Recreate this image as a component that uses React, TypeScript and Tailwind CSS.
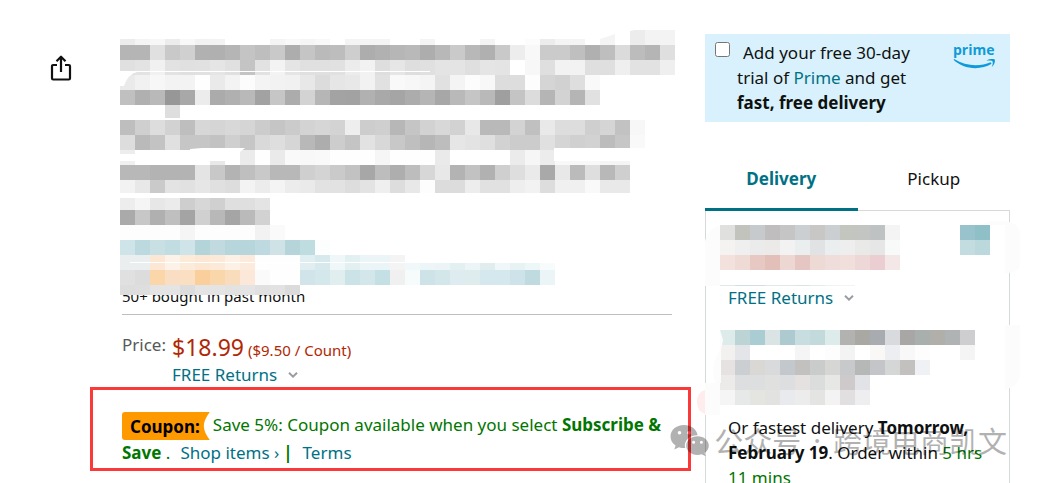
import React from "react";

type Band = { x?: number; y: number; h?: number; tiles: string };

const TILE = 15;

const titleBands: Band[] = [
  { y: 9, h: 6, tiles: "ec f4 f7 ec f8 f2 f3 -- -- -- f4 f8 f5 f8 -- f4 f4 f4 -- -- f4 -- -- -- f4 -- -- fc ec f4 f4" },
  { y: 15, tiles: "b5 b5 e0 c9 d0 b1 b0 b5 c4 be c9 ad c5 ba bd ce ad b1 b6 b9 ad b8 ca b8 b0 c9 ed f8 cb cb bf b0 be db bc b5 df" },
  { y: 30, tiles: "e0 e3 f1 e2 e0 e1 e5 e0 c4 e2 f3 e5 e0 e0 e1 ec f2 de e6 de e0 e4 e4 df e5 e4 -- f7 df f2 f2 df df ef e2 e2 ef" },
  { y: 45, tiles: "ea f1 f7 f3 f3 fe ea f3 fc f4 f2 f1 e8 dc e6 e8 f2 e1 f9 f7 f4 e1 f4 fc f8 dd dd fd d5 d1 de f9" },
  { y: 60, tiles: "c0 b0 b9 97 a8 ec ab b0 b9 a2 c6 ac d3 b6 a3 a2 b1 a9 a5 ac b5 a7 b9 c5 b9 9f c4 dc b5 d3 b5 e1" },
  { y: 75, h: 13, tiles: "-- -- -- de" },
  { y: 90, tiles: "be cf dd d2 be d7 d5 d8 d5 cc c5 cb d3 d6 d3 ee cd cf b7 c5 d2 d8 d2 e8 b9 b9 d3 c0 e9 dd dd cf d5 c2 f7" },
  { y: 105, tiles: "dd ba c3 e0 c6 c6 c2 cf c6 d9 de d6 b8 ad cd c4 e2 d8 c8 bf b6 bd e6 e3 df d2 cc cc e0 d5 d0 d2 bc c6 f9" },
  { y: 120, h: 4, tiles: "ed" },
  { y: 131, h: 4, tiles: "f0 -- -- -- -- -- e8" },
  { y: 120, tiles: "-- -- -- -- -- -- -- -- eb fe ea f9 f8 f9 fe fe fe f6 fe fe fe ea -- -- -- -- eb f6 ec" },
  { x: 435, y: 131, h: 4, tiles: "f8 f8 f8 f5 f5" },
  { y: 135, tiles: "b8 b8 b3 b3 b3 e4 c8 b3 bf c9 b8 b8 cf d4 ca c2 a7 bd ae bd d7 e8 b3 c2 b1 cf de ea a9 e8 bb de b8 cf" },
  { y: 150, h: 13, tiles: "f2 e8 ca e3 e1 e6 e0 dd f3 ec f4 ec ea e2 e2 dd e3 ef dd e8 fd dc dc ed e1 e1 ee f2 dd f0 f0 f9 e9 e9" },
  { y: 168, h: 12, tiles: "ed f5 e7 eb ce d7 d0 df df e4" },
  { y: 180, tiles: "aa c7 b0 bf a4 d0 b8 a5 ba d2" },
  { y: 195, tiles: "fd fd fd fd f5 fd fd fd fd f2 fa" },
  { y: 210, tiles: "cfe4e8 bbd9df c8e0e4 c2dde2 cfe4e9 b3d5da c0dae0 b7d6db b7d6db bfd9e0 cfe3e7 b5d5da bfdce1 fcfefe" },
  { y: 225, tiles: "ebeeee ebeeee fce7d4 fdf2e8 fdebd9 fce7d4 fce9d8 fdf1e6 fceadd fe fe fe e0edf1 d8e9ed f0f7f8 e3f0f2 ebf4f6 ebf4f6 f4" },
  { x: 285, y: 233, h: 7, tiles: "f1f8f9 ecf5f7 ecf4f6 e2f0f2 ebf4f6 dfedef eff7f9 e7f2f3 eef7f8 f7fbfc" },
  { y: 240, tiles: "e0 dc fad6a8 fadec3 fadfc2 facf9c fad6ab f8dcbc fce8d9 fa fe fe d0e4ea d4e8ec e1eef0 cbe2e7 d3e6ea c5e0e4 f0 f6fbfc cee3e8 d3e7eb deebf0 dfeced d4e8ed d5e8ed cde3e9 c0dbe0 ebf4f6" },
  { y: 255, h: 10, tiles: "dd de e4 e4 dc e4 e4 e2 e4 e0 e2 db" },
];

const priceBands: Band[] = [
  { y: 0, tiles: "e0e0df c3c3be c6cacd c0bdbe c6c5c6 cbcfd2 c8c7c5 cbcfd2 c3c5bf c2c5c2 bfc2c3 f4 -- -- -- -- 98c3cc 8fc0c7" },
  { y: 15, tiles: "f4f3f1 efeff0 eb ebeae8 f2 ebeeee e1e2e3 ebeeee ee e9e9e8 e6 f8faf9 -- -- -- -- c3dce0 bbd8dd" },
  { y: 30, tiles: "f2e1dc eedbd5 e8c8c2 e2c0b9 edd7d2 e5c6c3 eedad5 eedddb f0dfdb edd7d7 ebced2 f3e8e7" },
  { y: 60, h: 1, tiles: "dfe9e8 cfdfe4 cfdfe4 dfe9e8 dfe9e8 d8e5e5 e4eceb eef3f3 f4" },
];

const addressBands: Band[] = [
  { y: 0, tiles: "deebeb bdd4d6 a9cdd3 dae4e4 adcad0 c8dde0 c3dadc deebeb b2b2b0 a9a8a3 a8acb0 d8dade a8a7a5 a8afac b0afa9 afb3b4 ceced0" },
  { y: 15, tiles: "f3f1f0 e4e5e8 -- -- -- f5 -- fd f3 -- f9f8f6 eceef1 f8 fd -- -- f4" },
  { y: 30, tiles: "e6e2e1 cbcfd1 d9d8d4 d9dadc c3c8cc c2c1bf cacccb d6d7d5 c7c9ca b5b8b6 c4c5c8 d5d7d6 c2c1bf f0f1f4" },
  { y: 45, tiles: "ecebe9 dddee0 dddee0 e0e0df dddee0 e4e1e0 dbdddc e7e7e5 cecacb e1e3e6" },
  { y: 60, tiles: "f5f5f5 e7e9e8 e4e4e1 e2e2e0 e9eaed ececec e4e4e3 f3 e2dfe1 eeeef0" },
];

function Tiles({ bands }: { bands: Band[] }) {
  return (
    <g shapeRendering="crispEdges">
      {bands.map((band, b) =>
        band.tiles.split(" ").map((tone, i) =>
          tone === "--" ? null : (
            <rect
              key={`${b}-${i}`}
              x={(band.x ?? 0) + i * TILE}
              y={band.y}
              width={TILE}
              height={band.h ?? TILE}
              fill={tone.length === 2 ? `#${tone}${tone}${tone}` : `#${tone}`}
            />
          ),
        ),
      )}
    </g>
  );
}

function Chevron() {
  return (
    <svg viewBox="0 0 10 6" className="h-[6px] w-[10px]" fill="none" stroke="#999ca1" strokeWidth="2" aria-hidden="true">
      <path d="M1 .8 5 4.6 9 .8" />
    </svg>
  );
}

function ReturnsLink() {
  return (
    <a href="#returns" className="flex items-center gap-[11px] leading-6 text-[#007185]">
      FREE Returns
      <Chevron />
    </a>
  );
}

function PrimeLogo() {
  return (
    <div className="flex w-[43px] flex-col text-[#0f9ad8]">
      <span className="font-['Open_Sans',sans-serif] text-[14px] leading-[18px] font-bold">prime</span>
      <svg viewBox="0 0 43 10" className="h-[10px] w-[43px]" aria-hidden="true">
        <path d="M.5 .8C10 10.200 27 11.800 38.600 4.800L37.600 3.200C27 7.800 12.500 7.200 1.200 0Z" fill="currentColor" />
        <path d="M33.500 1.600C36.500 0 39.600-.2 41.800.5C42.300 3 41.400 5.600 38.800 8C39.600 5.400 40.200 3.600 39.400 2.300C38.200 1.500 36.200 1.600 33.500 1.600Z" fill="currentColor" />
      </svg>
    </div>
  );
}

function Smudges() {
  return (
    <svg viewBox="0 0 325 205" className="pointer-events-none absolute top-[215px] -left-2 h-[205px] w-[325px]" aria-hidden="true">
      <path d="M8 26Q12 12 23 11V71H8Z" fill="#fcfcfc" />
      <path d="M285 9Q295 5 308 6Q323 8 323 20V50Q322 58 308 58V10H285Z" fill="#fcfcfc" />
      <path d="M308 110H323V160Q321 173 308 174Z" fill="#fcfcfc" />
      <path d="M23 115 26 125 24 135V168H18Q13 150 23 135Z" fill="#fcfcfc" />
      <path d="M8 168H23V200H8Z" fill="#fcfcfc" />
      <path d="M8 175Q0 177 0 187Q0 196 8 199Z" fill="#ffecec" />
    </svg>
  );
}

function Watermark() {
  return (
    <div className="pointer-events-none absolute top-[422px] right-[33px] z-20 flex items-center gap-1 text-black opacity-30" aria-hidden="true">
      <svg viewBox="0 0 40 33" className="h-[33px] w-[40px]">
        <path
          fill="currentColor"
          fillRule="evenodd"
          d="M14 1C6.200 1 .5 6 .5 12.500C.5 16.300 2.500 19.500 5.600 21.600L4.300 25.600L9 23.300C10.900 24 13 24.200 15.200 24.100C13.300 17 19.600 11 27.600 11.300C26.600 5.200 21 1 14 1ZM9.500 7A1.800 1.800 0 1 0 9.500 10.600A1.800 1.800 0 1 0 9.500 7ZM19 7A1.800 1.800 0 1 0 19 10.600A1.800 1.800 0 1 0 19 7Z"
        />
        <path
          fill="currentColor"
          fillRule="evenodd"
          d="M27.500 12.200C21 12.200 16.200 16.400 16.200 21.600C16.200 27 21 31 27.500 31C29 31 30.400 30.800 31.700 30.300L35.600 32.300L34.600 29C37.200 27.200 38.800 24.600 38.800 21.600C38.800 16.400 34 12.200 27.500 12.200ZM23.600 16.800A1.500 1.500 0 1 0 23.600 19.800A1.500 1.500 0 1 0 23.600 16.800ZM31.400 16.800A1.500 1.500 0 1 0 31.400 19.800A1.500 1.500 0 1 0 31.400 16.800Z"
        />
      </svg>
      <span className="flex gap-3 font-['Noto_Sans_CJK_SC',sans-serif] text-[29px] leading-[36px] whitespace-nowrap">
        <span>公众号</span>
        <span className="font-['Noto_Sans',sans-serif]">·</span>
        <span>跨境电商凯文</span>
      </span>
    </div>
  );
}

export default function App() {
  return (
    <div className="relative flex h-screen items-start overflow-hidden bg-white pr-[30px] font-['Noto_Sans',sans-serif] text-[17px] leading-[25px] text-[#0f1111]">
      <div className="w-[90px] shrink-0 pt-[54px] pl-[50px]">
        <button type="button" aria-label="Share" className="block">
          <svg viewBox="0 0 22 28" className="h-[28px] w-[22px]" fill="none" stroke="#0f1111" strokeWidth="2.2" strokeLinejoin="round" aria-hidden="true">
            <path d="M7 11H3.200Q2 11 2 12.200V24.300Q2 25.500 3.200 25.500H18.800Q20 25.500 20 24.300V12.200Q20 11 18.800 11H15" />
            <path d="M11 18V3.200M6.500 7.200 11 2.700 15.500 7.200" />
          </svg>
        </button>
      </div>

      <main className="min-w-0 flex-1 pt-[30px]">
        <div className="relative z-10 pl-[30px]">
          <svg viewBox="0 0 556 265" className="h-[265px] w-[556px]" aria-hidden="true">
            <Tiles bands={titleBands} />
            <path d="M480 9 495 4V15H480Z" fill="#f4f4f4" />
            <path d="M510 1 515 0H525V15H510Z" fill="#ececec" />
            <path d="M525 0H555V15H525Z" fill="#f3f3f3" />
            <path d="M0 41H310V42H17Q8 44 4 56H0Z" fill="#fff" />
            <path d="M70 119 82 118H125L120 122V131H70Z" fill="#fff" />
            <path d="M10 232H285V233H10Z" fill="#fff" />
            <path d="M434 118H525V131H434Z" fill="#fff" />
          </svg>
        </div>
        <div className="mr-[19px] -mt-[11px] ml-8 border-b border-[#bbbfbf] pb-[5px] text-[15px]">50+ bought in past month</div>

        <div className="mt-[17px] ml-8 flex gap-1.5">
          <span className="text-[#565959]">Price:</span>
          <div>
            <div className="flex items-baseline gap-1 pt-[3px] text-[#b12704]">
              <span className="text-[23px]">$18.99</span>
              <span className="text-[15px]">($9.50 / Count)</span>
            </div>
            <ReturnsLink />
          </div>
        </div>

        <section className="border-3 border-[#fb3939] pt-[22px] pr-[22px] pb-[3px] pl-[29px] text-[#007600]">
          <span className="relative mr-[3px] inline-flex h-7 items-center pr-[10px] pl-2 align-top font-bold text-black">
            <svg viewBox="0 0 88 28" preserveAspectRatio="none" className="absolute inset-0 h-full w-full" aria-hidden="true">
              <path d="M3 0H88Q82 8 82 14T88 28H3Q0 28 0 25V3Q0 0 3 0Z" fill="#ff9900" />
            </svg>
            <span className="relative">Coupon:</span>
          </span>
          Save 5%: Coupon available when you select <b>Subscribe &amp; Save</b> .
          <a href="#items" className="mr-1 ml-2.5 text-[#007185]">Shop items ›</a>
          <b>|</b>
          <a href="#terms" className="ml-2.5 text-[#007185]">Terms</a>
        </section>
      </main>

      <aside className="relative ml-[14px] w-[305px] shrink-0 pt-[34px]">
        <div className="flex h-[88px] items-start bg-[#d9f1fc] pr-[14px] pl-[10px]">
          <input id="prime-trial" type="checkbox" className="mt-2 h-[15px] w-[15px] shrink-0" />
          <label htmlFor="prime-trial" className="flex-1 pt-[6px] pl-[7px]">
            <span className="pl-[6px]">Add your free 30-day</span>
            <br />
            trial of <a href="#prime" className="text-[#007185]">Prime</a> and get
            <br />
            <b>fast, free delivery</b>
          </label>
          <div className="pt-[7px]">
            <PrimeLogo />
          </div>
        </div>

        <div role="tablist" className="mt-6 flex h-[65px]">
          <button role="tab" aria-selected="true" type="button" className="flex-1 border-b-3 border-[#007185] pt-0.5 font-bold text-[#007185]">
            Delivery
          </button>
          <button role="tab" aria-selected="false" type="button" className="flex-1 border-b border-[#d5d9d9]">
            Pickup
          </button>
        </div>

        <div className="h-[300px] border-x border-[#d5d9d9] pt-[14px] pl-[14px]">
          <svg viewBox="0 0 270 61" className="h-[61px] w-[270px]" aria-hidden="true">
            <Tiles bands={priceBands} />
          </svg>
          <div className="pl-2">
            <ReturnsLink />
          </div>
          <svg viewBox="0 0 255 75" className="mt-5 h-[75px] w-[255px]" aria-hidden="true">
            <Tiles bands={addressBands} />
          </svg>
          <p className="mt-[10px] pr-4 pl-2">
            Or fastest delivery <b>Tomorrow, February 19</b>. Order within <span className="text-[#007600]">5 hrs 11 mins</span>
          </p>
        </div>
        <Smudges />
      </aside>

      <Watermark />
    </div>
  );
}
